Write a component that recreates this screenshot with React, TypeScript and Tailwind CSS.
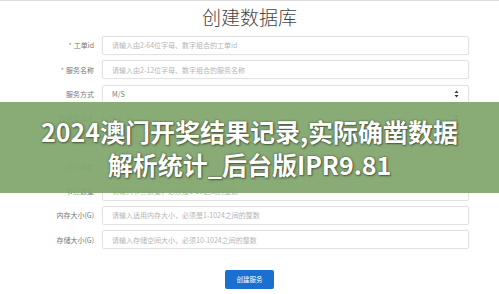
import React from "react";

type Row = { label: string; value: string; required?: boolean; select?: boolean; filled?: boolean };

const rows: Row[] = [
  { label: "工单id", value: "请输入由2-64位字母、数字组合的工单id", required: true },
  { label: "服务名称", value: "请输入由2-12位字母、数字组合的服务名称", required: true },
  { label: "服务方式", value: "M/S", select: true, filled: true },
  { label: "数据库版本", value: "5.7", select: true, filled: true },
  { label: "字符集", value: "utf8mb4", select: true, filled: true },
  { label: "CPU核数", value: "请输入CPU核数" },
  { label: "节点数量", value: "请输入节点数量，必须是1-10之间的整数" },
  { label: "内存大小(G)", value: "请输入适用内存大小，必须是1-1024之间的整数" },
  { label: "存储大小(G)", value: "请输入存储空间大小，必须10-1024之间的整数" },
];

function Arrows() {
  return (
    <svg width="5" height="8" viewBox="0 0 5 8" className="shrink-0">
      <path d="M2.5 0.5 L4.5 3 L0.5 3 Z" fill="#333" />
      <path d="M2.5 7.5 L4.5 5 L0.5 5 Z" fill="#333" />
    </svg>
  );
}

export default function App() {
  return (
    <div
      className="relative w-[499px] h-[294px] overflow-hidden bg-white border-t border-[#dcdcdc]"
      style={{ fontFamily: "'Noto Sans CJK SC', 'Noto Sans', sans-serif" }}
    >
      <h1 className="text-center text-[19px] leading-[26px] font-light text-[#444] pt-[3px]">创建数据库</h1>

      <div className="mt-[6px] flex flex-col gap-[5.3px]">
        {rows.map((r) => (
          <div key={r.label} className="flex items-center h-[19px]">
            <div className="w-[96px] pr-[2px] text-right text-[7px] text-[#777] whitespace-nowrap">
              {r.required && <span className="text-[#999] mr-[2px]">*</span>}
              {r.label}
            </div>
            <div className="ml-[6px] w-[367px] h-[19px] flex items-center justify-between px-[9px] border border-[#e2e2e2] rounded-[2px] shadow-[0_0_2px_rgba(0,0,0,0.06)]">
              <span className={`text-[7px] whitespace-nowrap ${r.filled ? "text-[#777]" : "text-[#b5b5b5]"}`}>{r.value}</span>
              {r.select && <Arrows />}
            </div>
          </div>
        ))}
      </div>

      <div className="mt-[21px] flex justify-center">
        <button className="w-[49px] h-[19px] rounded-[2px] bg-[#1a6fd0] text-white text-[6.5px]">创建服务</button>
      </div>

      <div className="absolute left-0 right-0 top-[101px] h-[91px] bg-[rgba(131,166,111,0.95)] flex flex-col items-center justify-center">
        <p
          className="text-white font-bold text-[25px] leading-[33px] whitespace-nowrap"
          style={{ textShadow: "0 0 2px rgba(40,50,30,0.75), 1px 1px 2px rgba(40,50,30,0.55)" }}
        >
          2024澳门开奖结果记录,实际确凿数据
        </p>
        <p
          className="text-white font-bold text-[25px] leading-[33px] whitespace-nowrap"
          style={{ textShadow: "0 0 2px rgba(40,50,30,0.75), 1px 1px 2px rgba(40,50,30,0.55)" }}
        >
          解析统计_后台版IPR9.81
        </p>
      </div>
    </div>
  );
}
